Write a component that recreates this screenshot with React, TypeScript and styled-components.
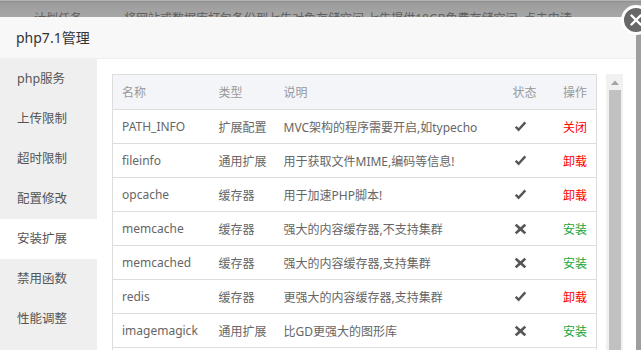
import React from "react";
import styled, { createGlobalStyle } from "styled-components";

const GlobalStyle = createGlobalStyle`
  html, body {
    margin: 0;
    padding: 0;
    width: 641px;
    height: 350px;
    overflow: hidden;
    font-family: "Noto Sans", "Noto Sans CJK SC", sans-serif;
  }
`;

const Page = styled.div`
  width: 641px;
  height: 350px;
  overflow: hidden;
  background: #9e9e9e;
  display: flex;
  flex-direction: column;
`;

const BackdropStrip = styled.div`
  height: 17px;
  flex: none;
  overflow: hidden;
  box-sizing: border-box;
  border-top: 1px solid #b4b4b4;
  background: linear-gradient(#8d8d8d 0, #9c9c9c 2px, #a8a8a8 17px);
  display: flex;
  align-items: flex-start;
  padding-top: 10px;
  color: #5f5f5f;
  font-size: 12px;
  line-height: 16px;
  white-space: nowrap;
`;

const BackdropText = styled.span<{ $left: number }>`
  margin-left: ${(p) => p.$left}px;
`;

const Modal = styled.div`
  position: relative;
  width: 636px;
  flex: none;
  background: #fff;
`;

const TitleBar = styled.div`
  height: 42px;
  box-sizing: border-box;
  background: #f8f8f8;
  border-bottom: 1px solid #eee;
  padding-left: 16px;
  font-size: 14px;
  line-height: 42px;
  color: #333;
`;

const CloseButton = styled.div`
  position: absolute;
  top: -12px;
  right: -15px;
  width: 30px;
  height: 30px;
  box-sizing: border-box;
  border-radius: 50%;
  border: 3px solid #fff;
  background: #686868;
  display: flex;
  align-items: center;
  justify-content: center;
`;

const Body = styled.div`
  display: flex;
  height: 520px;
`;

const Sidebar = styled.ul`
  width: 97px;
  flex: none;
  margin: 0;
  padding: 0;
  list-style: none;
  background: #efefef;
`;

const SideItem = styled.li<{ $active?: boolean }>`
  height: 40px;
  line-height: 40px;
  padding-left: 17px;
  font-size: 12.5px;
  color: #555;
  background: ${(p) => (p.$active ? "#fff" : "transparent")};
`;

const Content = styled.div`
  flex: 1;
  display: flex;
  align-items: flex-start;
  gap: 9px;
  padding: 15px 14px 0 15px;
  height: 440px;
  overflow: hidden;
`;

const ScrollTrack = styled.div`
  width: 17px;
  height: 440px;
  flex: none;
  background: #f1f1f1;
  display: flex;
  flex-direction: column;
`;

const ScrollButton = styled.div`
  height: 16px;
  flex: none;
  display: flex;
  align-items: center;
  justify-content: center;
`;

const ScrollThumb = styled.div`
  height: 300px;
  margin: 0 2px 0 3px;
  background: #c1c1c1;
`;

const Table = styled.table`
  width: 484px;
  flex: none;
  border-collapse: collapse;
  table-layout: fixed;
  border: 1px solid #ddd;
  font-size: 12px;
`;

const HeadRow = styled.tr`
  background: #f4f5f8;
`;

const Th = styled.th<{ $align?: string }>`
  height: 34px;
  padding: 0 9px 0 9px;
  font-weight: normal;
  color: #999;
  text-align: ${(p) => p.$align || "left"};
  border-bottom: 1px solid #ddd;
`;

const Td = styled.td<{ $align?: string }>`
  height: 33px;
  padding: 0 9px 0 9px;
  color: #666;
  text-align: ${(p) => p.$align || "left"};
  border-bottom: 1px solid #ddd;
  white-space: nowrap;
  overflow: hidden;
`;

const Action = styled.a<{ $kind: "red" | "green" }>`
  color: ${(p) => (p.$kind === "red" ? "#f00" : "#20a53a")};
  text-decoration: none;
`;

const StatusIcon = styled.svg`
  display: block;
  margin-left: 1px;
  color: #555;
`;

const CheckIcon = () => (
  <StatusIcon width="13" height="12" viewBox="0 0 13 12">
    <path d="M0.8 6.6 L4.6 10.6 L12.2 2.2 L10.4 0.6 L4.6 7.0 L2.6 4.9 Z" fill="currentColor" />
  </StatusIcon>
);

const CrossIcon = () => (
  <StatusIcon width="13" height="12" viewBox="0 0 13 12">
    <path
      d="M2.6 0.8 L6.5 4.2 L10.4 0.8 L12.2 2.6 L8.6 6 L12.2 9.4 L10.4 11.2 L6.5 7.8 L2.6 11.2 L0.8 9.4 L4.4 6 L0.8 2.6 Z"
      fill="currentColor"
    />
  </StatusIcon>
);

type Row = {
  name: string;
  type: string;
  desc: string;
  on: boolean;
  action: string;
};

const rows: Row[] = [
  { name: "PATH_INFO", type: "扩展配置", desc: "MVC架构的程序需要开启,如typecho", on: true, action: "关闭" },
  { name: "fileinfo", type: "通用扩展", desc: "用于获取文件MIME,编码等信息!", on: true, action: "卸载" },
  { name: "opcache", type: "缓存器", desc: "用于加速PHP脚本!", on: true, action: "卸载" },
  { name: "memcache", type: "缓存器", desc: "强大的内容缓存器,不支持集群", on: false, action: "安装" },
  { name: "memcached", type: "缓存器", desc: "强大的内容缓存器,支持集群", on: false, action: "安装" },
  { name: "redis", type: "缓存器", desc: "更强大的内容缓存器,支持集群", on: true, action: "卸载" },
  { name: "imagemagick", type: "通用扩展", desc: "比GD更强大的图形库", on: false, action: "安装" },
  { name: "xdebug", type: "调试器", desc: "不多说,不了解的不要安装", on: false, action: "安装" },
  { name: "imap", type: "邮件服务", desc: "邮件服务器必备", on: false, action: "安装" },
  { name: "exif", type: "通用扩展", desc: "用于读取图片EXIF信息", on: false, action: "安装" },
  { name: "intl", type: "通用扩展", desc: "提供国际化支持", on: false, action: "安装" },
  { name: "xsl", type: "通用扩展", desc: "xsl解析扩展", on: false, action: "安装" },
];

const menu = ["php服务", "上传限制", "超时限制", "配置修改", "安装扩展", "禁用函数", "性能调整", "负载状态", "FPM日志", "慢日志"];

export default function App() {
  return (
    <Page>
      <GlobalStyle />
      <BackdropStrip>
        <BackdropText $left={34}>计划任务</BackdropText>
        <BackdropText $left={42}>
          将网站或数据库打包备份到七牛对象存储空间,七牛提供10GB免费存储空间, 点击申请
        </BackdropText>
      </BackdropStrip>
      <Modal>
        <TitleBar>php7.1管理</TitleBar>
        <CloseButton>
          <svg width="12" height="12" viewBox="0 0 12 12">
            <path d="M1.5 1.5 L10.5 10.5 M10.5 1.5 L1.5 10.5" stroke="#fff" strokeWidth="2.4" strokeLinecap="round" />
          </svg>
        </CloseButton>
        <Body>
          <Sidebar>
            {menu.map((m) => (
              <SideItem key={m} $active={m === "安装扩展"}>
                {m}
              </SideItem>
            ))}
          </Sidebar>
          <Content>
            <Table>
              <colgroup>
                <col style={{ width: 97 }} />
                <col style={{ width: 65 }} />
                <col style={{ width: 229 }} />
                <col style={{ width: 50 }} />
                <col style={{ width: 43 }} />
              </colgroup>
              <thead>
                <HeadRow>
                  <Th>名称</Th>
                  <Th>类型</Th>
                  <Th>说明</Th>
                  <Th>状态</Th>
                  <Th $align="right">操作</Th>
                </HeadRow>
              </thead>
              <tbody>
                {rows.map((r) => (
                  <tr key={r.name}>
                    <Td>{r.name}</Td>
                    <Td>{r.type}</Td>
                    <Td>{r.desc}</Td>
                    <Td>{r.on ? <CheckIcon /> : <CrossIcon />}</Td>
                    <Td $align="right">
                      <Action $kind={r.action === "安装" ? "green" : "red"}>{r.action}</Action>
                    </Td>
                  </tr>
                ))}
              </tbody>
            </Table>
            <ScrollTrack>
              <ScrollButton>
                <svg width="8" height="5" viewBox="0 0 8 5">
                  <path d="M0 5 L4 0.5 L8 5 Z" fill="#a3a3a3" />
                </svg>
              </ScrollButton>
              <ScrollThumb />
            </ScrollTrack>
          </Content>
        </Body>
      </Modal>
    </Page>
  );
}
